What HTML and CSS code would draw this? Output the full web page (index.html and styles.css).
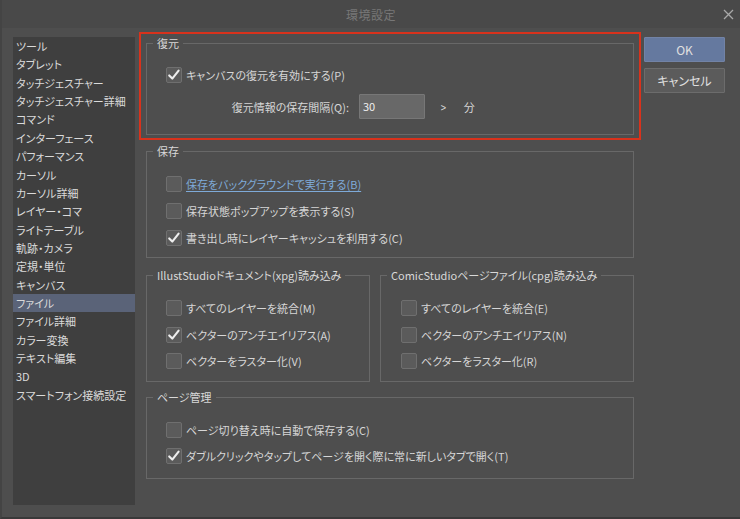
FILE: index.html
```html
<!DOCTYPE html>
<html lang="ja">
<head>
<meta charset="utf-8">
<title>環境設定</title>
<link rel="stylesheet" href="styles.css">
</head>
<body>
<div class="window">
  <div class="titlebar">
    <span class="title">環境設定</span>
    <svg class="close" width="11" height="11" viewBox="0 0 11 11"><path d="M1 1L10 10M10 1L1 10" stroke="#a8a8a8" stroke-width="1.3" fill="none"/></svg>
  </div>
  <div class="content">
    <ul class="sidebar">
      <li>ツール</li>
      <li>タブレット</li>
      <li>タッチジェスチャー</li>
      <li>タッチジェスチャー詳細</li>
      <li>コマンド</li>
      <li>インターフェース</li>
      <li>パフォーマンス</li>
      <li>カーソル</li>
      <li>カーソル詳細</li>
      <li>レイヤー・コマ</li>
      <li>ライトテーブル</li>
      <li>軌跡・カメラ</li>
      <li>定規・単位</li>
      <li>キャンバス</li>
      <li class="selected">ファイル</li>
      <li>ファイル詳細</li>
      <li>カラー変換</li>
      <li>テキスト編集</li>
      <li>3D</li>
      <li>スマートフォン接続設定</li>
    </ul>

    <div class="main">
      <div class="highlight">
        <fieldset class="group g-restore">
          <legend>復元</legend>
          <div class="row">
            <span class="cb checked"><svg width="16" height="16" viewBox="0 0 16 16"><path d="M3.2 8.4L6.3 11.6L12.6 3.6" stroke="#eeeeee" stroke-width="2.1" fill="none" stroke-linecap="round" stroke-linejoin="round"/></svg></span>
            <span class="label">キャンバスの復元を有効にする(P)</span>
          </div>
          <div class="interval">
            <span class="ilabel">復元情報の保存間隔(Q):</span>
            <span class="input">30</span>
            <span class="arrow">&gt;</span>
            <span class="unit">分</span>
          </div>
        </fieldset>
      </div>

      <fieldset class="group g-save">
        <legend>保存</legend>
        <div class="rows">
          <div class="row"><span class="cb"></span><span class="label link">保存をバックグラウンドで実行する(B)</span></div>
          <div class="row"><span class="cb"></span><span class="label">保存状態ポップアップを表示する(S)</span></div>
          <div class="row"><span class="cb checked"><svg width="16" height="16" viewBox="0 0 16 16"><path d="M3.2 8.4L6.3 11.6L12.6 3.6" stroke="#eeeeee" stroke-width="2.1" fill="none" stroke-linecap="round" stroke-linejoin="round"/></svg></span><span class="label">書き出し時にレイヤーキャッシュを利用する(C)</span></div>
        </div>
      </fieldset>

      <div class="pair">
        <fieldset class="group g-illust">
          <legend>IllustStudioドキュメント(xpg)読み込み</legend>
          <div class="rows">
            <div class="row"><span class="cb"></span><span class="label">すべてのレイヤーを統合(M)</span></div>
            <div class="row"><span class="cb checked"><svg width="16" height="16" viewBox="0 0 16 16"><path d="M3.2 8.4L6.3 11.6L12.6 3.6" stroke="#eeeeee" stroke-width="2.1" fill="none" stroke-linecap="round" stroke-linejoin="round"/></svg></span><span class="label">ベクターのアンチエイリアス(A)</span></div>
            <div class="row"><span class="cb"></span><span class="label">ベクターをラスター化(V)</span></div>
          </div>
        </fieldset>
        <fieldset class="group g-comic">
          <legend>ComicStudioページファイル(cpg)読み込み</legend>
          <div class="rows">
            <div class="row"><span class="cb"></span><span class="label">すべてのレイヤーを統合(E)</span></div>
            <div class="row"><span class="cb"></span><span class="label">ベクターのアンチエイリアス(N)</span></div>
            <div class="row"><span class="cb"></span><span class="label">ベクターをラスター化(R)</span></div>
          </div>
        </fieldset>
      </div>

      <fieldset class="group g-page">
        <legend>ページ管理</legend>
        <div class="rows">
          <div class="row"><span class="cb"></span><span class="label">ページ切り替え時に自動で保存する(C)</span></div>
          <div class="row"><span class="cb checked"><svg width="16" height="16" viewBox="0 0 16 16"><path d="M3.2 8.4L6.3 11.6L12.6 3.6" stroke="#eeeeee" stroke-width="2.1" fill="none" stroke-linecap="round" stroke-linejoin="round"/></svg></span><span class="label">ダブルクリックやタップしてページを開く際に常に新しいタブで開く(T)</span></div>
        </div>
      </fieldset>
    </div>

    <div class="buttons">
      <button class="btn ok">OK</button>
      <button class="btn">キャンセル</button>
    </div>
  </div>
</div>
</body>
</html>
```

FILE: styles.css
```css
* { box-sizing: border-box; }

html, body {
  margin: 0;
  padding: 0;
  background: #4e4e4e;
}

body {
  font-family: "Noto Sans CJK JP", "Noto Sans", sans-serif;
  font-size: 11px;
  color: #d6d6d6;
  font-feature-settings: "palt";
}

.window {
  width: 740px;
  height: 519px;
  background: #4e4e4e;
  border-left: 2px solid #444444;
  border-bottom: 2px solid #393939;
  overflow: hidden;
}

.titlebar {
  height: 28px;
  background: #494949;
  display: flex;
  align-items: center;
  justify-content: center;
  position: relative;
}

.title {
  color: #777777;
  font-size: 12px;
  letter-spacing: 0.5px;
}

.close {
  position: absolute;
  right: 6px;
  top: 9px;
}

.content {
  display: flex;
  align-items: flex-start;
  padding-left: 11px;
}

.sidebar {
  list-style: none;
  margin: 9px 0 0 0;
  padding: 0;
  width: 122px;
  height: 468px;
  background: #3f3f3f;
}

.sidebar li {
  height: 18.36px;
  line-height: 18.36px;
  padding-left: 3px;
  font-size: 11px;
  white-space: nowrap;
  color: #dadada;
}

.sidebar li.selected {
  background: #5a6378;
}

.main {
  width: 502px;
  margin: 4px 0 0 4px;
}

.highlight {
  border: 2px solid #d8321c;
  padding: 1px 5px 3px 5px;
}

.group {
  margin: 0;
  padding: 0;
  border: 1px solid #686868;
  min-width: 0;
}

.group legend {
  margin-left: 6px;
  padding: 0 4px;
  height: 16px;
  line-height: 16px;
  font-size: 11px;
  white-space: nowrap;
  color: #d8d8d8;
}

.g-restore {
  padding-top: 16px;
  padding-bottom: 15px;
}

.g-restore > .row {
  padding-left: 19px;
}

.g-save,
.g-illust,
.g-comic,
.g-page {
  padding-top: 17px;
}

.g-save {
  margin: 3px 7px 0 7px;
  padding-bottom: 11px;
}

.pair {
  display: flex;
  gap: 10px;
  margin: 9px 7px 0 7px;
}

.g-illust {
  width: 224px;
  padding-bottom: 12px;
}

.g-comic {
  flex: 1;
  padding-bottom: 12px;
}

.g-page {
  margin: 7px 7px 0 7px;
  padding-bottom: 14px;
}

.rows {
  display: flex;
  flex-direction: column;
  gap: 11px;
  padding-left: 19px;
}

.g-comic .rows {
  padding-left: 20px;
}

.g-illust .rows,
.g-comic .rows {
  gap: 10.5px;
}

.g-page .rows {
  gap: 10px;
}

.row {
  display: flex;
  align-items: center;
  height: 16px;
  white-space: nowrap;
}

.cb {
  width: 16px;
  height: 16px;
  flex: none;
  background: #5b5b5b;
  border: 1px solid #6f6f6f;
  border-radius: 2px;
  position: relative;
}

.cb svg {
  position: absolute;
  left: -1px;
  top: -1px;
}

.label {
  margin-left: 4px;
  font-size: 11px;
  line-height: 16px;
}

.label.link {
  color: #7eaad8;
  text-decoration: underline;
  text-underline-offset: 2px;
}

.interval {
  display: flex;
  align-items: center;
  margin-top: 11px;
  height: 25px;
}

.ilabel {
  width: 202px;
  text-align: right;
  font-size: 11px;
}

.input {
  margin-left: 10px;
  width: 66px;
  height: 25px;
  background: #686868;
  border: 1px solid #777777;
  border-radius: 1px;
  padding-left: 3px;
  line-height: 23px;
  font-size: 11px;
  color: #eeeeee;
}

.arrow {
  margin-left: 15px;
  font-size: 12px;
  color: #d8d8d8;
  transform: scaleX(0.8);
}

.unit {
  margin-left: 17px;
  font-size: 11px;
}

.buttons {
  display: flex;
  flex-direction: column;
  gap: 6px;
  margin: 9px 0 0 3px;
  width: 81px;
}

.btn {
  height: 25px;
  width: 81px;
  font-family: inherit;
  font-feature-settings: "palt";
  font-size: 12px;
  color: #e0e0e0;
  background: #5b5b5b;
  border: 1px solid #6c6c6c;
  border-radius: 1px;
  padding: 0;
}

.btn.ok {
  background: #65799f;
  border-color: #7283a6;
}
```
